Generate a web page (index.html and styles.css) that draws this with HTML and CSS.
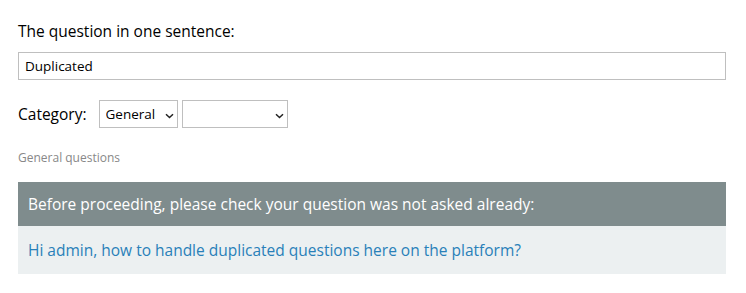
FILE: index.html
```html
<!DOCTYPE html>
<html lang="en">
<head>
  <meta charset="UTF-8">
  <meta name="viewport" content="width=device-width, initial-scale=1.0">
  <title>Ask a question</title>
  <link rel="stylesheet" href="styles.css">
</head>
<body>
  <form class="ask-form">
    <!-- Title -->
    <label class="field-label" for="title">The question in one sentence:</label>
    <input type="text" id="title" class="title-input" value="Duplicated">
    <!-- Category -->
    <div class="category-row">
      <span class="category-label">Category:</span>
      <span class="select-wrap select-main">
        <select>
          <option>General</option>
        </select>
        <svg class="chevron" width="9" height="6" viewBox="0 0 9 6"><path d="M1 1.2 L4.5 4.5 L8 1.2" fill="none" stroke="#222" stroke-width="1.5"/></svg>
      </span>
      <span class="select-wrap select-sub">
        <select>
          <option></option>
        </select>
        <svg class="chevron" width="9" height="6" viewBox="0 0 9 6"><path d="M1 1.2 L4.5 4.5 L8 1.2" fill="none" stroke="#222" stroke-width="1.5"/></svg>
      </span>
    </div>
    <div class="category-desc">General questions</div>
    <!-- Similar questions -->
    <div class="similar">
      <div class="similar-head">Before proceeding, please check your question was not asked already:</div>
      <div class="similar-list">
        <a href="#" class="similar-link">Hi admin, how to handle duplicated questions here on the platform?</a>
      </div>
    </div>
  </form>
</body>
</html>
```

FILE: styles.css
```css
body {
  margin: 0;
  padding: 0 20px 0 18px;
  font-family: "Open Sans", Lato, sans-serif;
  color: #000;
  background: #fff;
}
.ask-form {
  padding-top: 21px;
}
.field-label {
  display: block;
  font-size: 15.5px;
  line-height: 20px;
  margin-bottom: 11px;
}
.title-input {
  display: block;
  box-sizing: border-box;
  width: 100%;
  height: 28px;
  margin: 0;
  padding: 0 6px;
  border: 1px solid #bfbfbf;
  font-family: inherit;
  font-size: 13.5px;
  color: #000;
}
.category-row {
  display: flex;
  align-items: center;
  margin-top: 20px;
}
.category-label {
  font-size: 15.5px;
  margin-right: 12px;
}
.select-wrap {
  position: relative;
  display: block;
  height: 28px;
}
.select-wrap select {
  -webkit-appearance: none;
  appearance: none;
  box-sizing: border-box;
  width: 100%;
  height: 28px;
  margin: 0;
  padding: 0 20px 0 6px;
  border: 1px solid #bfbfbf;
  border-radius: 0;
  background: #fff;
  font-family: inherit;
  font-size: 13.5px;
  color: #000;
}
.chevron {
  position: absolute;
  right: 4px;
  top: 13px;
  pointer-events: none;
}
.select-main {
  width: 79px;
  margin-right: 4px;
}
.select-sub {
  width: 106px;
}
.category-desc {
  margin-top: 22px;
  font-size: 12px;
  line-height: 16px;
  color: #888;
}
.similar {
  margin-top: 16px;
}
.similar-head {
  background: #7f8c8d;
  color: #fff;
  font-size: 15.5px;
  line-height: 20px;
  padding: 12px 10px;
}
.similar-list {
  background: #ecf0f1;
  padding: 14px 10px;
}
.similar-link {
  display: block;
  color: #2980b9;
  font-size: 15.5px;
  line-height: 20px;
  text-decoration: none;
}
```
